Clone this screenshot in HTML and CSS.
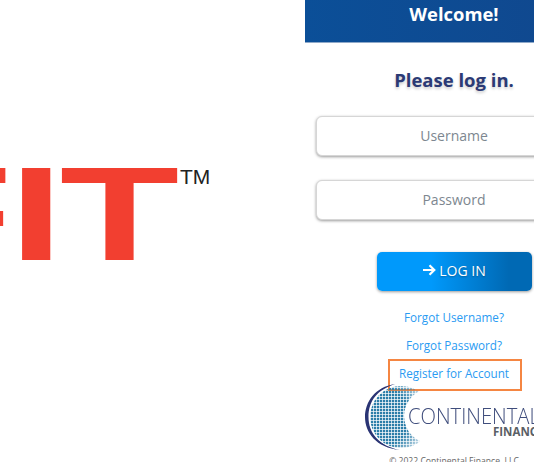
FILE: index.html
```html
<!DOCTYPE html>
<html lang="en">
<head>
    <meta charset="UTF-8">
    <meta name="viewport" content="width=device-width, initial-scale=1.0">
    <title>Log in</title>
    <link rel="stylesheet" href="styles.css">
</head>
<body>
    <div class="page">
        <div class="brand">
            <span class="brand-name">FIT</span>
            <span class="brand-tm">TM</span>
        </div>
        <div class="login-panel">
            <div class="login-header">Welcome!</div>
            <h2 class="login-title">Please log in.</h2>
            <form class="login-form">
                <input type="text" class="input" placeholder="Username">
                <input type="password" class="input" placeholder="Password">
                <button type="button" class="login-btn">
                    <svg class="arrow" width="14" height="12" viewBox="0 0 14 12">
                        <path d="M1 6h11M7.500 1.200L12.300 6 7.500 10.800" fill="none" stroke="#fff" stroke-width="2.200"/>
                    </svg>
                    LOG IN
                </button>
            </form>
            <div class="links">
                <a class="link">Forgot Username?</a>
                <a class="link">Forgot Password?</a>
                <a class="link link-marked">Register for Account</a>
            </div>
            <div class="company-logo">
                <svg class="globe" width="64" height="70" viewBox="0 0 64 70">
                    <defs>
                        <pattern id="dots" width="3" height="3" patternUnits="userSpaceOnUse">
                            <rect width="2.300" height="2.300" fill="#2c7ea9"/>
                        </pattern>
                        <radialGradient id="fade" gradientUnits="userSpaceOnUse" cx="14" cy="35" r="50">
                            <stop offset="0.600" stop-color="#fff"/>
                            <stop offset="1" stop-color="#fff" stop-opacity="0.200"/>
                        </radialGradient>
                        <mask id="globe-mask">
                            <circle cx="36" cy="35" r="31" fill="url(#fade)"/>
                            <circle cx="67" cy="34" r="28" fill="#000"/>
                        </mask>
                    </defs>
                    <rect width="64" height="70" fill="url(#dots)" mask="url(#globe-mask)"/>
                    <path d="M30 2C10 5 0 20 0 35s11 31 35 33C14 64 3.500 51 3.500 35S12 8 30 2z" fill="#2a3474"/>
                </svg>
                <div class="company-text">
                    <span class="company-name">CONTINENTAL</span>
                    <span class="company-sub">FINANCE</span>
                </div>
            </div>
            <div class="copyright">© 2022 Continental Finance, LLC</div>
        </div>
    </div>
</body>
</html>
```

FILE: styles.css
```css
html, body {
    margin: 0;
    height: 100%;
    overflow: hidden;
    background: #fff;
}

.page {
    display: flex;
    width: 534px;
    height: 462px;
    overflow: hidden;
    font-family: "Open Sans", "Liberation Sans", sans-serif;
}

.brand {
    flex: 0 0 305px;
    position: relative;
    overflow: hidden;
}

.brand-name {
    position: absolute;
    left: -107px;
    top: 139px;
    font-family: "Liberation Sans", sans-serif;
    font-weight: bold;
    font-size: 134px;
    line-height: 150px;
    letter-spacing: -2.400px;
    color: #f23f30;
    transform: scaleX(1.46);
    transform-origin: left top;
}

.brand-tm {
    position: absolute;
    left: 180px;
    top: 165px;
    font-family: "Liberation Sans", sans-serif;
    font-size: 21px;
    line-height: 24px;
    color: #222;
}

.login-panel {
    flex: 0 0 298px;
    display: flex;
    flex-direction: column;
    align-items: center;
    position: relative;
}

.login-header {
    align-self: stretch;
    height: 43px;
    background: linear-gradient(90deg, #0b4f98, #11478d);
    border-bottom: 1px solid #8fa9c9;
    box-sizing: border-box;
    color: #fff;
    font-weight: 700;
    font-size: 18.400px;
    line-height: 27px;
    text-align: center;
}

.login-title {
    margin: 24px 0 0;
    font-size: 18.500px;
    line-height: 26px;
    font-weight: 700;
    color: #2b3a75;
    text-shadow: 0 2px 3px rgba(0, 0, 0, 0.2);
}

.login-form {
    display: flex;
    flex-direction: column;
    align-items: center;
    margin-top: 23px;
}

.input {
    width: 276px;
    height: 40px;
    box-sizing: border-box;
    margin-bottom: 24px;
    padding-bottom: 2px;
    border: 1px solid #d6d6d6;
    border-radius: 6px;
    box-shadow: 0 1px 3px rgba(0, 0, 0, 0.4);
    background: #fff;
    font-family: inherit;
    font-size: 14px;
    text-align: center;
    outline: none;
}

.input::placeholder {
    color: #7d8790;
    opacity: 1;
}

.login-btn {
    display: flex;
    align-items: center;
    justify-content: center;
    gap: 3px;
    width: 155px;
    height: 39px;
    margin-top: 8px;
    padding-bottom: 4px;
    border: none;
    border-radius: 5px;
    background: linear-gradient(90deg, #0099fb 35%, #0069b4 85%);
    box-shadow: 0 1px 3px rgba(0, 0, 0, 0.4);
    color: #fff;
    font-family: inherit;
    font-size: 14px;
    text-shadow: 0 1px 2px rgba(0, 0, 0, 0.3);
}

.links {
    display: flex;
    flex-direction: column;
    align-items: center;
    gap: 11px;
    margin-top: 18px;
}

.link {
    position: relative;
    font-size: 11.700px;
    line-height: 17px;
    color: #2a9bf2;
}

.link-marked::after {
    content: "";
    position: absolute;
    left: -11px;
    right: -13px;
    top: -6px;
    bottom: -9px;
    border: 2px solid #f58642;
}

.company-logo {
    position: absolute;
    left: 60px;
    top: 382px;
    display: flex;
}

.globe {
    flex: none;
}

.company-text {
    display: flex;
    flex-direction: column;
    margin: 20px 0 0 -21px;
    white-space: nowrap;
}

.company-name {
    font-weight: 300;
    font-size: 22px;
    line-height: 27px;
    color: #3f4d7c;
    transform: scaleX(0.92);
    transform-origin: left center;
}

.company-sub {
    margin: -3px 0 0 85px;
    font-size: 11.500px;
    line-height: 12px;
    font-weight: 700;
    color: #5a5f66;
}

.copyright {
    position: absolute;
    left: 0;
    right: 0;
    top: 455px;
    text-align: center;
    font-size: 8.600px;
    line-height: 12px;
    color: #666;
}
```
